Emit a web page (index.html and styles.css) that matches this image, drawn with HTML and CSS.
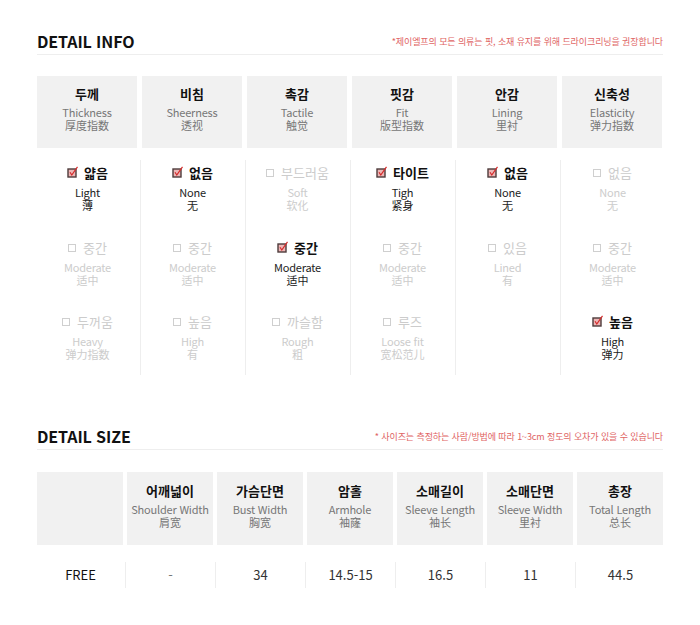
FILE: index.html
```html
<!DOCTYPE html>
<html lang="ko">
<head>
<meta charset="utf-8">
<link rel="stylesheet" href="styles.css">
</head>
<body>
<div class="page">
  <section class="info">
    <div class="title-row">
      <h2 class="title">DETAIL INFO</h2>
      <p class="note">*제이엘프의 모든 의류는 핏, 소재 유지를 위해 드라이크리닝을 권장합니다</p>
    </div>
    <div class="info-head">
      <div class="hcell"><div class="ko">두께</div><div class="en">Thickness</div><div class="zh">厚度指数</div></div>
      <div class="hcell"><div class="ko">비침</div><div class="en">Sheerness</div><div class="zh">透视</div></div>
      <div class="hcell"><div class="ko">촉감</div><div class="en">Tactile</div><div class="zh">触觉</div></div>
      <div class="hcell"><div class="ko">핏감</div><div class="en">Fit</div><div class="zh">版型指数</div></div>
      <div class="hcell"><div class="ko">안감</div><div class="en">Lining</div><div class="zh">里衬</div></div>
      <div class="hcell"><div class="ko">신축성</div><div class="en">Elasticity</div><div class="zh">弹力指数</div></div>
    </div>
    <div class="info-body">
      <div class="col">
        <div class="opt on"><div class="lbl"><svg class="chk" viewBox="0 0 12 12" width="12" height="12"><rect x="1" y="3" width="8" height="8" fill="#ecb6b6" stroke="#4d3b3b" stroke-width="1.4"/><path d="M3 6.2 L4.8 9 L10.5 0.8" fill="none" stroke="#d42a2a" stroke-width="1.2"/></svg>얇음</div><div class="en">Light</div><div class="zh">薄</div></div>
        <div class="opt"><div class="lbl"><span class="box"></span>중간</div><div class="en">Moderate</div><div class="zh">适中</div></div>
        <div class="opt"><div class="lbl"><span class="box"></span>두꺼움</div><div class="en">Heavy</div><div class="zh">弹力指数</div></div>
      </div>
      <div class="col">
        <div class="opt on"><div class="lbl"><svg class="chk" viewBox="0 0 12 12" width="12" height="12"><rect x="1" y="3" width="8" height="8" fill="#ecb6b6" stroke="#4d3b3b" stroke-width="1.4"/><path d="M3 6.2 L4.8 9 L10.5 0.8" fill="none" stroke="#d42a2a" stroke-width="1.2"/></svg>없음</div><div class="en">None</div><div class="zh">无</div></div>
        <div class="opt"><div class="lbl"><span class="box"></span>중간</div><div class="en">Moderate</div><div class="zh">适中</div></div>
        <div class="opt"><div class="lbl"><span class="box"></span>높음</div><div class="en">High</div><div class="zh">有</div></div>
      </div>
      <div class="col">
        <div class="opt"><div class="lbl"><span class="box"></span>부드러움</div><div class="en">Soft</div><div class="zh">软化</div></div>
        <div class="opt on"><div class="lbl"><svg class="chk" viewBox="0 0 12 12" width="12" height="12"><rect x="1" y="3" width="8" height="8" fill="#ecb6b6" stroke="#4d3b3b" stroke-width="1.4"/><path d="M3 6.2 L4.8 9 L10.5 0.8" fill="none" stroke="#d42a2a" stroke-width="1.2"/></svg>중간</div><div class="en">Moderate</div><div class="zh">适中</div></div>
        <div class="opt"><div class="lbl"><span class="box"></span>까슬함</div><div class="en">Rough</div><div class="zh">粗</div></div>
      </div>
      <div class="col">
        <div class="opt on"><div class="lbl"><svg class="chk" viewBox="0 0 12 12" width="12" height="12"><rect x="1" y="3" width="8" height="8" fill="#ecb6b6" stroke="#4d3b3b" stroke-width="1.4"/><path d="M3 6.2 L4.8 9 L10.5 0.8" fill="none" stroke="#d42a2a" stroke-width="1.2"/></svg>타이트</div><div class="en">Tigh</div><div class="zh">紧身</div></div>
        <div class="opt"><div class="lbl"><span class="box"></span>중간</div><div class="en">Moderate</div><div class="zh">适中</div></div>
        <div class="opt"><div class="lbl"><span class="box"></span>루즈</div><div class="en">Loose fit</div><div class="zh">宽松范儿</div></div>
      </div>
      <div class="col">
        <div class="opt on"><div class="lbl"><svg class="chk" viewBox="0 0 12 12" width="12" height="12"><rect x="1" y="3" width="8" height="8" fill="#ecb6b6" stroke="#4d3b3b" stroke-width="1.4"/><path d="M3 6.2 L4.8 9 L10.5 0.8" fill="none" stroke="#d42a2a" stroke-width="1.2"/></svg>없음</div><div class="en">None</div><div class="zh">无</div></div>
        <div class="opt"><div class="lbl"><span class="box"></span>있음</div><div class="en">Lined</div><div class="zh">有</div></div>
      </div>
      <div class="col">
        <div class="opt"><div class="lbl"><span class="box"></span>없음</div><div class="en">None</div><div class="zh">无</div></div>
        <div class="opt"><div class="lbl"><span class="box"></span>중간</div><div class="en">Moderate</div><div class="zh">适中</div></div>
        <div class="opt on"><div class="lbl"><svg class="chk" viewBox="0 0 12 12" width="12" height="12"><rect x="1" y="3" width="8" height="8" fill="#ecb6b6" stroke="#4d3b3b" stroke-width="1.4"/><path d="M3 6.2 L4.8 9 L10.5 0.8" fill="none" stroke="#d42a2a" stroke-width="1.2"/></svg>높음</div><div class="en">High</div><div class="zh">弹力</div></div>
      </div>
    </div>
  </section>

  <section class="size">
    <div class="title-row">
      <h2 class="title">DETAIL SIZE</h2>
      <p class="note">* 사이즈는 측정하는 사람/방법에 따라 1~3cm 정도의 오차가 있을 수 있습니다</p>
    </div>
    <div class="size-head">
      <div class="hcell"></div>
      <div class="hcell"><div class="ko">어깨넓이</div><div class="en">Shoulder Width</div><div class="zh">肩宽</div></div>
      <div class="hcell"><div class="ko">가슴단면</div><div class="en">Bust Width</div><div class="zh">胸宽</div></div>
      <div class="hcell"><div class="ko">암홀</div><div class="en">Armhole</div><div class="zh">袖窿</div></div>
      <div class="hcell"><div class="ko">소매길이</div><div class="en">Sleeve Length</div><div class="zh">袖长</div></div>
      <div class="hcell"><div class="ko">소매단면</div><div class="en">Sleeve Width</div><div class="zh">里衬</div></div>
      <div class="hcell"><div class="ko">총장</div><div class="en">Total Length</div><div class="zh">总长</div></div>
    </div>
    <div class="size-row">
      <div class="dcell name">FREE</div>
      <div class="dcell dash">-</div>
      <div class="dcell">34</div>
      <div class="dcell">14.5-15</div>
      <div class="dcell">16.5</div>
      <div class="dcell">11</div>
      <div class="dcell">44.5</div>
    </div>
  </section>
</div>
</body>
</html>
```

FILE: styles.css
```css
* { box-sizing: border-box; }
html, body { margin: 0; padding: 0; background: #fff; }
body {
  font-family: "Noto Sans CJK KR", "Noto Sans", sans-serif;
  color: #222;
}
.page {
  width: 626px;
  margin-left: 37px;
  padding-top: 31px;
}
.title-row {
  display: flex;
  justify-content: space-between;
  align-items: flex-end;
  border-bottom: 1px solid #eeeeee;
  padding-bottom: 3px;
}
.title {
  margin: 0;
  font-size: 16px;
  line-height: 20px;
  font-weight: 700;
  color: #111;
  letter-spacing: -0.1px;
}
.note {
  margin: 0 0 3px 0;
  font-size: 9px;
  line-height: 12px;
  color: #e06464;
  letter-spacing: -0.1px;
}
.hcell {
  background: #f1f1f1;
  text-align: center;
  padding-top: 10px;
}
.hcell .ko {
  font-size: 13px;
  line-height: 16px;
  font-weight: 700;
  color: #111;
}
.hcell .en {
  margin-top: 4px;
  font-size: 11px;
  line-height: 13px;
  color: #777;
  letter-spacing: -0.2px;
}
.hcell .zh {
  font-size: 11px;
  line-height: 13px;
  color: #777;
}

/* info */
.info-head {
  margin-top: 21px;
  display: grid;
  grid-template-columns: repeat(6, 100px);
  column-gap: 5px;
}
.info-head .hcell { height: 72px; }
.info-body {
  margin: 12px -2.5px 0;
  display: grid;
  grid-template-columns: repeat(6, 105px);
}
.col {
  border-left: 1px solid #eeeeee;
  padding: 5px 0 13px;
  height: 215px;
  display: flex;
  flex-direction: column;
  gap: 26.5px;
  text-align: center;
}
.col:first-child { border-left-color: transparent; }
.opt { height: 48px; color: #cccccc; }
.opt .lbl {
  font-size: 13px;
  line-height: 16px;
  font-weight: 400;
  display: flex;
  justify-content: center;
  align-items: center;
  gap: 7px;
}
.opt .en {
  margin-top: 5px;
  font-size: 11px;
  line-height: 13px;
  letter-spacing: -0.2px;
}
.opt .zh {
  font-size: 11px;
  line-height: 13px;
}
.opt.on { color: #222; }
.opt.on .lbl { font-weight: 700; color: #111; gap: 5px; }
.box {
  width: 8px;
  height: 8px;
  border: 1px solid #cfcfcf;
  display: inline-block;
}
.chk {
  display: block;
  flex: none;
  margin-top: -2px;
}

/* size */
.size .title-row { margin-top: 51px; }
.size-head {
  margin-top: 22px;
  display: grid;
  grid-template-columns: repeat(7, 86px);
  column-gap: 4px;
}
.size-head .hcell { height: 73px; padding-top: 11px; }
.size-row {
  margin: 17px -2px 0;
  display: grid;
  grid-template-columns: repeat(7, 90px);
}
.dcell {
  border-left: 1px solid #eeeeee;
  height: 26px;
  line-height: 26px;
  text-align: center;
  font-size: 13px;
  color: #333;
}
.dcell.name { border-left-color: transparent; color: #111; }
.dcell.dash { color: #777; }
```
